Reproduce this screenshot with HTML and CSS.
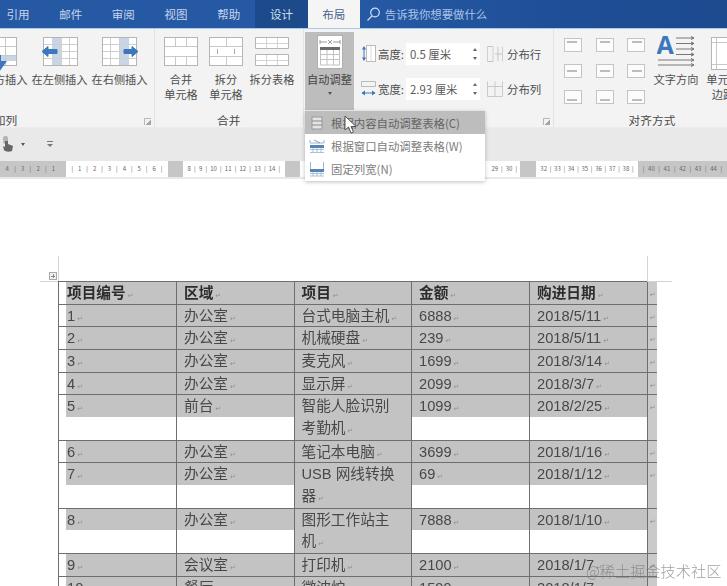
FILE: index.html
```html
<!DOCTYPE html>
<html lang="zh">
<head>
<meta charset="utf-8">
<title>Word 表格布局</title>
<link rel="stylesheet" href="styles.css">
</head>
<body>
<div class="page">
  <nav class="tabs">
    <span class="tab first">引用</span><span class="tab">邮件</span><span class="tab">审阅</span><span class="tab">视图</span><span class="tab">帮助</span><span class="tab design">设计</span><span class="tab active">布局</span>
    <span class="tell">
      <svg class="tell-icon" width="15" height="15" viewBox="0 0 15 15"><circle cx="9" cy="5.500" r="4.300" fill="none" stroke="#cfe0f5" stroke-width="1.200"/><path d="M6 9L1.500 13.500" stroke="#cfe0f5" stroke-width="1.300"/></svg>
      告诉我你想要做什么
    </span>
  </nav>

  <section class="ribbon">
    <div class="group g-rows">
      <div class="btns">
        <div class="btn w60">
          <svg class="ic" width="34" height="34" viewBox="0 0 34 34"><rect x=".5" y=".5" width="33" height="28" fill="#fff" stroke="#b5b5b5"/><rect x="1" y="18" width="32" height="6" fill="#c9d4e4"/><path d="M11.500 1V28M22.500 1V28M1 9.500H33M1 18.500H33" stroke="#c8c8c8" fill="none"/><path d="M17 18V26M12 25L17 32L22 25Z" fill="#3b78bd" stroke="#3b78bd" stroke-width="2"/></svg>
          <span class="lb">在下方插入</span>
        </div>
        <div class="btn w60">
          <svg class="ic" width="40" height="34" viewBox="0 0 40 34"><rect x="3.500" y=".5" width="34" height="28" fill="#fff" stroke="#b5b5b5"/><rect x="12" y="1" width="9" height="27" fill="#c9d4e4"/><path d="M21.500 1V28M29.500 1V28M4 7.500H37M4 14.500H37M4 21.500H37" stroke="#cfcfcf" fill="none"/><path d="M2 14.500L8 9.500V12.500H17V16.500H8V19.500Z" fill="#3b78bd" stroke="#3b78bd"/></svg>
          <span class="lb">在左侧插入</span>
        </div>
        <div class="btn w60">
          <svg class="ic" width="40" height="34" viewBox="0 0 40 34"><rect x="2.500" y=".5" width="34" height="28" fill="#fff" stroke="#b5b5b5"/><rect x="20" y="1" width="9" height="27" fill="#c9d4e4"/><path d="M10.500 1V28M19.500 1V28M3 7.500H36M3 14.500H36M3 21.500H36" stroke="#cfcfcf" fill="none"/><path d="M38 14.500L32 9.500V12.500H24V16.500H32V19.500Z" fill="#3b78bd" stroke="#3b78bd"/></svg>
          <span class="lb">在右侧插入</span>
        </div>
      </div>
      <div class="glabel">行和列</div>
      <i class="launch"></i>
    </div>

    <div class="group g-merge">
      <div class="btns">
        <div class="btn w45">
          <svg class="ic" width="34" height="34" viewBox="0 0 34 34"><rect x=".5" y=".5" width="33" height="28" fill="#fff" stroke="#b5b5b5"/><path d="M11.500 1V9M22.500 1V9M11.500 20V28M22.500 20V28M1 9.500H33M1 19.500H33" stroke="#c8c8c8" fill="none"/></svg>
          <span class="lb">合并<br>单元格</span>
        </div>
        <div class="btn w45">
          <svg class="ic" width="34" height="34" viewBox="0 0 34 34"><rect x=".5" y=".5" width="33" height="28" fill="#fff" stroke="#b5b5b5"/><path d="M17.500 1V9M17.500 20V28M1 9.500H33M1 19.500H33" stroke="#c8c8c8" fill="none"/><path d="M8.500 12V17M25.500 12V17" stroke="#aaa" fill="none"/></svg>
          <span class="lb">拆分<br>单元格</span>
        </div>
        <div class="btn w47">
          <svg class="ic" width="34" height="34" viewBox="0 0 34 34"><path d="M.5 .5H33.500V11.500H.5ZM.5 17.500H33.500V28.500H.5Z" fill="#fff" stroke="#b5b5b5"/><path d="M11.500 1V11M22.500 1V11M11.500 18V28M22.500 18V28M1 6.500H33M1 23.500H33" stroke="#d4d4d4" fill="none"/></svg>
          <span class="lb">拆分表格</span>
        </div>
      </div>
      <div class="glabel">合并</div>
    </div>

    <div class="group g-size">
      <div class="btns">
        <div class="autofit">
          <svg class="af-ic" width="26" height="34" viewBox="0 0 26 34"><rect x=".5" y=".5" width="25" height="33" fill="#fff" stroke="#b0b0b0"/><path d="M3 5V9M23 5V9M3 7H10M16 7H23M11 5L15 9M15 5L11 9" stroke="#999" fill="none"/><rect x="3" y="12" width="20" height="3" fill="#6a6a6a"/><path d="M3.500 15V30H22.500V15M3 19.500H23M3 24.500H23M10 15V30M16.500 15V30" stroke="#c2c2c2" fill="none"/></svg>
          <span class="lb">自动调整</span>
          <i class="caret"></i>
        </div>
        <div class="dims">
          <div class="dim">
            <svg class="dim-ic" width="15" height="20" viewBox="0 0 15 20"><rect x="5.500" y="1.500" width="9" height="16" fill="#fff" stroke="#bbb"/><path d="M10 2V17" stroke="#ddd"/><path d="M3 3V16" stroke="#3b78bd"/><path d="M1 5.500L3 2L5 5.500ZM1 13.500L3 17L5 13.500Z" fill="#3b78bd"/></svg>
            <span class="dim-l">高度:</span>
            <span class="spin"><span>0.5 厘米</span><span class="arrows"><i class="up"></i><i class="down"></i></span></span>
            <svg class="dist" width="16" height="16" viewBox="0 0 16 16"><path d="M.5 .5V15.500M6 .5V15.500M15.500 .5V15.500" stroke="#d0d0d0" fill="none"/><path d="M.5 .5H6M.5 15.500H6M8 8H15M11 1V15" stroke="#c4c4c4" fill="none"/></svg>
            <span class="dist-l">分布行</span>
          </div>
          <div class="dim">
            <svg class="dim-ic" width="15" height="20" viewBox="0 0 15 20"><path d="M.5 2.500H14.500M.5 7.500H14.500M.5 2.500V7.500M14.500 2.500V7.500" fill="none" stroke="#bbb"/><path d="M1 14H14" stroke="#3b78bd"/><path d="M4 11.500L.5 14L4 16.500ZM11 11.500L14.500 14L11 16.500Z" fill="#3b78bd"/></svg>
            <span class="dim-l">宽度:</span>
            <span class="spin"><span>2.93 厘米</span><span class="arrows"><i class="up"></i><i class="down"></i></span></span>
            <svg class="dist" width="16" height="16" viewBox="0 0 16 16"><path d="M.5 .5V15.500M8 .5V15.500M15.500 .5V15.500M.5 5.500H15.500M.5 15.500H15.500" stroke="#cacaca" fill="none"/></svg>
            <span class="dist-l">分布列</span>
          </div>
        </div>
      </div>
      <i class="launch"></i>
    </div>

    <div class="group g-align">
      <div class="btns">
        <div class="aligns">
          <i class="al t l"></i><i class="al t c"></i><i class="al t r"></i>
          <i class="al m l"></i><i class="al m c"></i><i class="al m r"></i>
          <i class="al b l"></i><i class="al b c"></i><i class="al b r"></i>
        </div>
        <div class="btn w47">
          <span class="dir">
            <svg width="38" height="36" viewBox="0 0 38 36"><text x="-.5" y="20" class="dir-a">A</text><path d="M19 4H36M19 9.500H36M19 15H36M19 20.500H36M1 26H36M1 31H36" stroke="#6b6b6b" stroke-width=".9" fill="none"/><path d="M34 2.500L37 4L34 5.500M34 8L37 9.500L34 11M34 13.500L37 15L34 16.500M34 19L37 20.500L34 22M34 24.500L37 26L34 27.500M34 29.500L37 31L34 32.500" stroke="#6b6b6b" fill="none"/></svg>
          </span>
          <span class="lb">文字方向</span>
        </div>
        <div class="btn w47">
          <svg class="ic shift" width="34" height="34" viewBox="0 0 34 34"><rect x=".5" y=".5" width="33" height="32" fill="#fff" stroke="#b5b5b5"/><path d="M5.500 1V32M28.500 1V32M1 5.500H33M1 27.500H33" stroke="#c8c8c8" fill="none"/></svg>
          <span class="lb">单元格<br>边距</span>
        </div>
      </div>
      <div class="glabel">对齐方式</div>
    </div>
  </section>

  <div class="qat">
    <svg width="14" height="18" viewBox="0 0 14 18"><rect x="2" y="1" width="5" height="8" rx="2" fill="#b5b5b5"/><path d="M4 6V12L2 11L3 15C4 17 9 17 11 16L12 11L7 9V6Z" fill="#666"/></svg>
    <i class="qat-caret"></i>
    <svg class="qat-more" width="8" height="8" viewBox="0 0 8 8"><path d="M1 1.500H7" stroke="#777"/><path d="M1 4L4 7L7 4Z" fill="#777"/></svg>
  </div>

  <div class="ruler">
    <div class="seg g s66"><span>4</span><span>|</span><span>3</span><span>|</span><span>2</span><span>|</span><span>1</span><span></span></div>
    <div class="seg s102"><span>|</span><span>1</span><span>|</span><span>2</span><span>|</span><span>3</span><span>|</span><span>4</span><span>|</span><span>5</span><span>|</span><span>6</span><span>|</span></div>
    <div class="seg g s15"></div>
    <div class="seg s102"><span>8</span><span>|</span><span>9</span><span>|</span><span>10</span><span>|</span><span>11</span><span>|</span><span>12</span><span>|</span><span>13</span><span>|</span><span>14</span><span>|</span></div>
    <div class="seg g s15"></div>
    <div class="seg s220"><span></span><span>29</span><span>|</span><span>30</span><span>|</span></div>
    <div class="seg g s16"></div>
    <div class="seg s102"><span>32</span><span>|</span><span>33</span><span>|</span><span>34</span><span>|</span><span>35</span><span>|</span><span>36</span><span>|</span><span>37</span><span>|</span><span>38</span><span>|</span></div>
    <div class="seg g s89"><span>|</span><span>40</span><span>|</span><span>41</span><span>|</span><span>42</span><span>|</span><span>43</span><span>|</span><span>44</span><span>|</span></div>
  </div>

  <main class="doc">
    <div class="table-wrap">
      <i class="crop c1"></i><i class="crop c2"></i><i class="crop c3"></i><i class="crop c4"></i>
      <i class="handle"></i>
      <div class="sheet">
        <div class="cell hd first"><div class="ln">项目编号<em>↵</em></div></div><div class="cell hd"><div class="ln">区域<em>↵</em></div></div><div class="cell hd"><div class="ln">项目<em>↵</em></div></div><div class="cell hd"><div class="ln">金额<em>↵</em></div></div><div class="cell hd"><div class="ln">购进日期<em>↵</em></div></div><div class="eor"><em>↵</em></div>
        <div class="cell first"><div class="ln">1<em>↵</em></div></div><div class="cell"><div class="ln">办公室<em>↵</em></div></div><div class="cell"><div class="ln">台式电脑主机<em>↵</em></div></div><div class="cell"><div class="ln">6888<em>↵</em></div></div><div class="cell"><div class="ln">2018/5/11<em>↵</em></div></div><div class="eor"><em>↵</em></div>
        <div class="cell first"><div class="ln">2<em>↵</em></div></div><div class="cell"><div class="ln">办公室<em>↵</em></div></div><div class="cell"><div class="ln">机械硬盘<em>↵</em></div></div><div class="cell"><div class="ln">239<em>↵</em></div></div><div class="cell"><div class="ln">2018/5/11<em>↵</em></div></div><div class="eor"><em>↵</em></div>
        <div class="cell first"><div class="ln">3<em>↵</em></div></div><div class="cell"><div class="ln">办公室<em>↵</em></div></div><div class="cell"><div class="ln">麦克风<em>↵</em></div></div><div class="cell"><div class="ln">1699<em>↵</em></div></div><div class="cell"><div class="ln">2018/3/14<em>↵</em></div></div><div class="eor"><em>↵</em></div>
        <div class="cell first"><div class="ln">4<em>↵</em></div></div><div class="cell"><div class="ln">办公室<em>↵</em></div></div><div class="cell"><div class="ln">显示屏<em>↵</em></div></div><div class="cell"><div class="ln">2099<em>↵</em></div></div><div class="cell"><div class="ln">2018/3/7<em>↵</em></div></div><div class="eor"><em>↵</em></div>
        <div class="cell first"><div class="ln">5<em>↵</em></div></div><div class="cell"><div class="ln">前台<em>↵</em></div></div><div class="cell"><div class="ln">智能人脸识别</div><div class="ln">考勤机<em>↵</em></div></div><div class="cell"><div class="ln">1099<em>↵</em></div></div><div class="cell"><div class="ln">2018/2/25<em>↵</em></div></div><div class="eor"><em>↵</em></div>
        <div class="cell first"><div class="ln">6<em>↵</em></div></div><div class="cell"><div class="ln">办公室<em>↵</em></div></div><div class="cell"><div class="ln">笔记本电脑<em>↵</em></div></div><div class="cell"><div class="ln">3699<em>↵</em></div></div><div class="cell"><div class="ln">2018/1/16<em>↵</em></div></div><div class="eor"><em>↵</em></div>
        <div class="cell first"><div class="ln">7<em>↵</em></div></div><div class="cell"><div class="ln">办公室<em>↵</em></div></div><div class="cell"><div class="ln">USB 网线转换</div><div class="ln">器<em>↵</em></div></div><div class="cell"><div class="ln">69<em>↵</em></div></div><div class="cell"><div class="ln">2018/1/12<em>↵</em></div></div><div class="eor"><em>↵</em></div>
        <div class="cell first"><div class="ln">8<em>↵</em></div></div><div class="cell"><div class="ln">办公室<em>↵</em></div></div><div class="cell"><div class="ln">图形工作站主</div><div class="ln">机<em>↵</em></div></div><div class="cell"><div class="ln">7888<em>↵</em></div></div><div class="cell"><div class="ln">2018/1/10<em>↵</em></div></div><div class="eor"><em>↵</em></div>
        <div class="cell first"><div class="ln">9<em>↵</em></div></div><div class="cell"><div class="ln">会议室<em>↵</em></div></div><div class="cell"><div class="ln">打印机<em>↵</em></div></div><div class="cell"><div class="ln">2100<em>↵</em></div></div><div class="cell"><div class="ln">2018/1/7<em>↵</em></div></div><div class="eor"><em>↵</em></div>
        <div class="cell first"><div class="ln">10<em>↵</em></div></div><div class="cell"><div class="ln">餐厅<em>↵</em></div></div><div class="cell"><div class="ln">微波炉<em>↵</em></div></div><div class="cell"><div class="ln">1599<em>↵</em></div></div><div class="cell"><div class="ln">2018/1/7<em>↵</em></div></div><div class="eor"><em>↵</em></div>
      </div>
    </div>
  </main>

  <div class="menu">
    <div class="item hot">
      <svg width="16" height="16" viewBox="0 0 16 16"><path d="M3 2H13V14H3Z" fill="#e4e4e4" stroke="#999"/><path d="M3 6H13M3 10H13" stroke="#888"/></svg>
      根据内容自动调整表格(C)
    </div>
    <div class="item">
      <svg width="16" height="16" viewBox="0 0 16 16"><path d="M1 2V5H15V2" fill="none" stroke="#9bb4d0"/><path d="M5 2L11 5" stroke="#999"/><rect x="1" y="7" width="14" height="3" fill="#5a82b4"/><path d="M1 11.500H15M1 14.500H15M4 10V15M8 10V15M12 10V15" stroke="#a9c0dc"/></svg>
      根据窗口自动调整表格(W)
    </div>
    <div class="item">
      <svg width="16" height="16" viewBox="0 0 16 16"><path d="M1.500 1V8M14.500 1V8" stroke="#9bb4d0"/><rect x="1" y="8" width="14" height="3" fill="#5a82b4"/><path d="M1 12.500H15M1 15H15M4 11V15M8 11V15M12 11V15" stroke="#a9c0dc"/></svg>
      固定列宽(N)
    </div>
  </div>

  <svg class="cursor" width="14" height="20" viewBox="0 0 14 20"><path d="M1 1V15L4.500 12L7 18L9.500 17L7 11.500H12Z" fill="#fff" stroke="#555"/></svg>
  <div class="mark">@稀土掘金技术社区</div>
</div>
</body>
</html>
```

FILE: styles.css
```css
* { box-sizing: border-box; }
html, body { margin: 0; padding: 0; background: #fff; }
body { width: 727px; height: 586px; overflow: hidden; font-family: "Noto Sans CJK SC", "Noto Sans", sans-serif; }
i, em { font-style: normal; }
.page { position: relative; width: 727px; height: 586px; overflow: hidden; filter: blur(.6px); }

/* tabs */
.tabs { display: flex; height: 28px; background: linear-gradient(90deg, #2659a4 0%, #2659a4 50%, #1f4f98 75%, #1d4a8f 100%); color: #c6d6ec; font-size: 11.500px; line-height: 28px; }
.tab { flex: none; width: 52.700px; text-align: center; }
.tab.first { margin-left: -8.400px; }
.tab.design { background: #1c4a8a; color: #d4e0f0; }
.tab.active { background: #f5f5f5; color: #44628f; width: 52px; }
.tell { display: flex; align-items: center; margin-left: 6px; gap: 4px; color: #a9c3e6; font-size: 11.400px; }

/* ribbon */
.ribbon { display: flex; height: 100px; background: #f3f3f3; border-top: 1px solid #a8cbea; overflow: hidden; border-bottom: 1px solid #ececec; }
.group { position: relative; flex: none; display: flex; flex-direction: column; height: 99px; border-right: 1px solid #e3e3e3; }
.btns { display: flex; height: 83px; }
.glabel { text-align: center; font-size: 11.700px; line-height: 16px; color: #4a4a4a; }
.g-rows { margin-left: -154px; width: 308.500px; }
.g-rows .btns { justify-content: flex-end; padding-right: 4px; }
.g-merge { width: 149.500px; }
.g-merge .btns { padding-left: 4px; }
.g-size { width: 250px; }
.g-size .btns { padding-left: 1px; }
.g-align { width: 196px; border-right: 0; }
.g-align .btns { padding-left: 10px; }
.btn { flex: none; display: flex; flex-direction: column; align-items: center; padding-top: 8px; }
.w60 { width: 60px; }
.w45 { width: 45px; }
.w47 { width: 47px; }
.ic { display: block; height: 34px; margin-bottom: 0; flex: none; }
.ic.shift { margin-left: 10px; }
.lb { font-size: 11.200px; line-height: 15px; color: #4e4e4e; text-align: center; white-space: nowrap; padding-top: 1px; }
.launch { position: absolute; right: 3px; bottom: 3px; width: 7px; height: 7px; border-left: 1px solid #b8b8b8; border-top: 1px solid #b8b8b8; background: linear-gradient(135deg, transparent 55%, #a5a5a5 55%); }

/* autofit */
.autofit { flex: none; width: 49px; height: 78px; margin-top: 3px; background: #bdbdbd; display: flex; flex-direction: column; align-items: center; padding-top: 3px; }
.af-ic { display: block; flex: none; margin-bottom: 1.500px; }
.autofit .lb { color: #444; }
.caret { width: 0; height: 0; margin-top: 5px; border: 2px solid transparent; border-top: 3px solid #555; border-bottom: 0; }
.dims { display: flex; flex-direction: column; gap: 14px; padding: 14px 0 0 7px; }
.dim { display: flex; align-items: center; height: 21px; font-size: 11.400px; color: #4e4e4e; }
.dim-ic { flex: none; margin-right: 2px; }
.dim-l { flex: none; width: 28px; white-space: nowrap; }
.spin { flex: none; display: flex; align-items: center; justify-content: space-between; width: 74px; height: 22px; background: #fff; padding: 0 3px 0 4px; color: #5a5a5a; }
.arrows { display: flex; flex-direction: column; gap: 6px; }
.arrows i { width: 0; height: 0; border: 2.500px solid transparent; }
.up { border-top: 0 !important; border-bottom: 3px solid #666 !important; }
.down { border-bottom: 0 !important; border-top: 3px solid #666 !important; }
.dist { flex: none; margin-left: 7px; }
.dist-l { flex: none; margin-left: 4px; }

/* alignment */
.aligns { flex: none; width: 88.500px; display: grid; grid-template-columns: repeat(3, 18px); grid-auto-rows: 14px; column-gap: 13.500px; row-gap: 12px; padding-top: 9px; }
.al { position: relative; display: block; background: #fcfcfc; border: 1px solid #c4c4c4; }
.al::after { content: ""; position: absolute; width: 10px; height: 2px; background: #bcbcbc; }
.t::after { top: 2px; }
.m::after { top: 5px; }
.b::after { bottom: 2px; }
.l::after { left: 2px; }
.c::after { left: 3px; }
.r::after { right: 2px; }
.dir { display: block; height: 35px; flex: none; margin-top: -3px; }
.dir + .lb { margin-top: 2px; }
.dir-a { font-family: "Open Sans", sans-serif; font-weight: 700; font-size: 25px; fill: #3b78bd; }

/* quick access */
.qat { display: flex; align-items: center; height: 32px; background: #e9e9e9; padding-left: 1px; }
.qat-caret { width: 0; height: 0; margin-left: 6px; border: 2.500px solid transparent; border-top: 3px solid #555; border-bottom: 0; }
.qat-more { margin-left: 21px; }

/* ruler */
.ruler { display: flex; height: 19px; background: #e9e9e9; padding-top: 1px; padding-bottom: 2px; }
.seg { flex: none; display: flex; justify-content: space-around; align-items: center; padding: 0 3px; background: #fff; color: #666; font-size: 6px; line-height: 16px; overflow: hidden; }
.seg.g { background: #c6c6c6; }
.s66 { width: 66px; }
.s102 { width: 102px; }
.s15 { width: 15px; }
.s16 { width: 16px; }
.s220 { width: 220px; justify-content: flex-end; gap: 3px; }
.s89 { width: 89px; }

/* document */
.doc { padding: 102px 0 0 58px; font-family: "Liberation Sans", "Noto Sans CJK SC", sans-serif; }
.table-wrap { position: relative; width: 600px; }
.crop { position: absolute; background: #d4d4d4; }
.c1 { left: 0; top: -25px; width: 1px; height: 25px; }
.c2 { left: -18px; top: 0; width: 18px; height: 1px; }
.c3 { left: 589px; top: -25px; width: 1px; height: 25px; }
.c4 { left: 589px; top: 0; width: 25px; height: 1px; }
.handle { position: absolute; left: -9px; top: -9px; width: 8px; height: 8px; border: 1px solid #a9a9a9; background: linear-gradient(#888, #888) center / 4px 1px no-repeat, linear-gradient(#888, #888) center / 1px 4px no-repeat, #f2f2f2; }
.sheet { display: grid; grid-template-columns: 118px 117.500px 117.500px 118px 117.500px 10px; font-size: 14.670px; color: #484848; }
.cell { border-top: 1px solid #6e6e6e; border-left: 1px solid #6e6e6e; background: #fff; }
.eor { border-top: 1px solid #6e6e6e; border-left: 1px solid #6e6e6e; background: #cacaca; text-align: right; line-height: 21.660px; padding-right: 1px; }
.ln { height: 21.660px; line-height: 23.300px; padding-left: 7px; background: #c3c3c3; white-space: nowrap; }
.ln + .ln { height: 22.660px; line-height: 22.660px; }
.first .ln { margin-left: 7px; padding-left: 1px; }
.hd { font-weight: 700; color: #2c2c2c; }
em { font-size: 7px; line-height: 1; font-weight: 400; color: #909090; margin-left: 2px; font-family: "DejaVu Sans", sans-serif; }

/* dropdown */
.menu { position: absolute; left: 305px; top: 111px; width: 180px; height: 70px; background: #fff; box-shadow: 0 1px 4px rgba(0,0,0,.25); font-size: 11.400px; color: #7d7d7d; }
.item { display: flex; align-items: center; gap: 6px; height: 23.300px; padding-left: 4px; white-space: nowrap; }
.item.hot { background: #bdbdbd; color: #646464; }
.cursor { position: absolute; left: 344px; top: 115px; }
.mark { position: absolute; left: 586px; top: 560px; font-size: 15.200px; line-height: 20px; color: rgba(120,120,120,.7); font-weight: 300; white-space: nowrap; }
```
